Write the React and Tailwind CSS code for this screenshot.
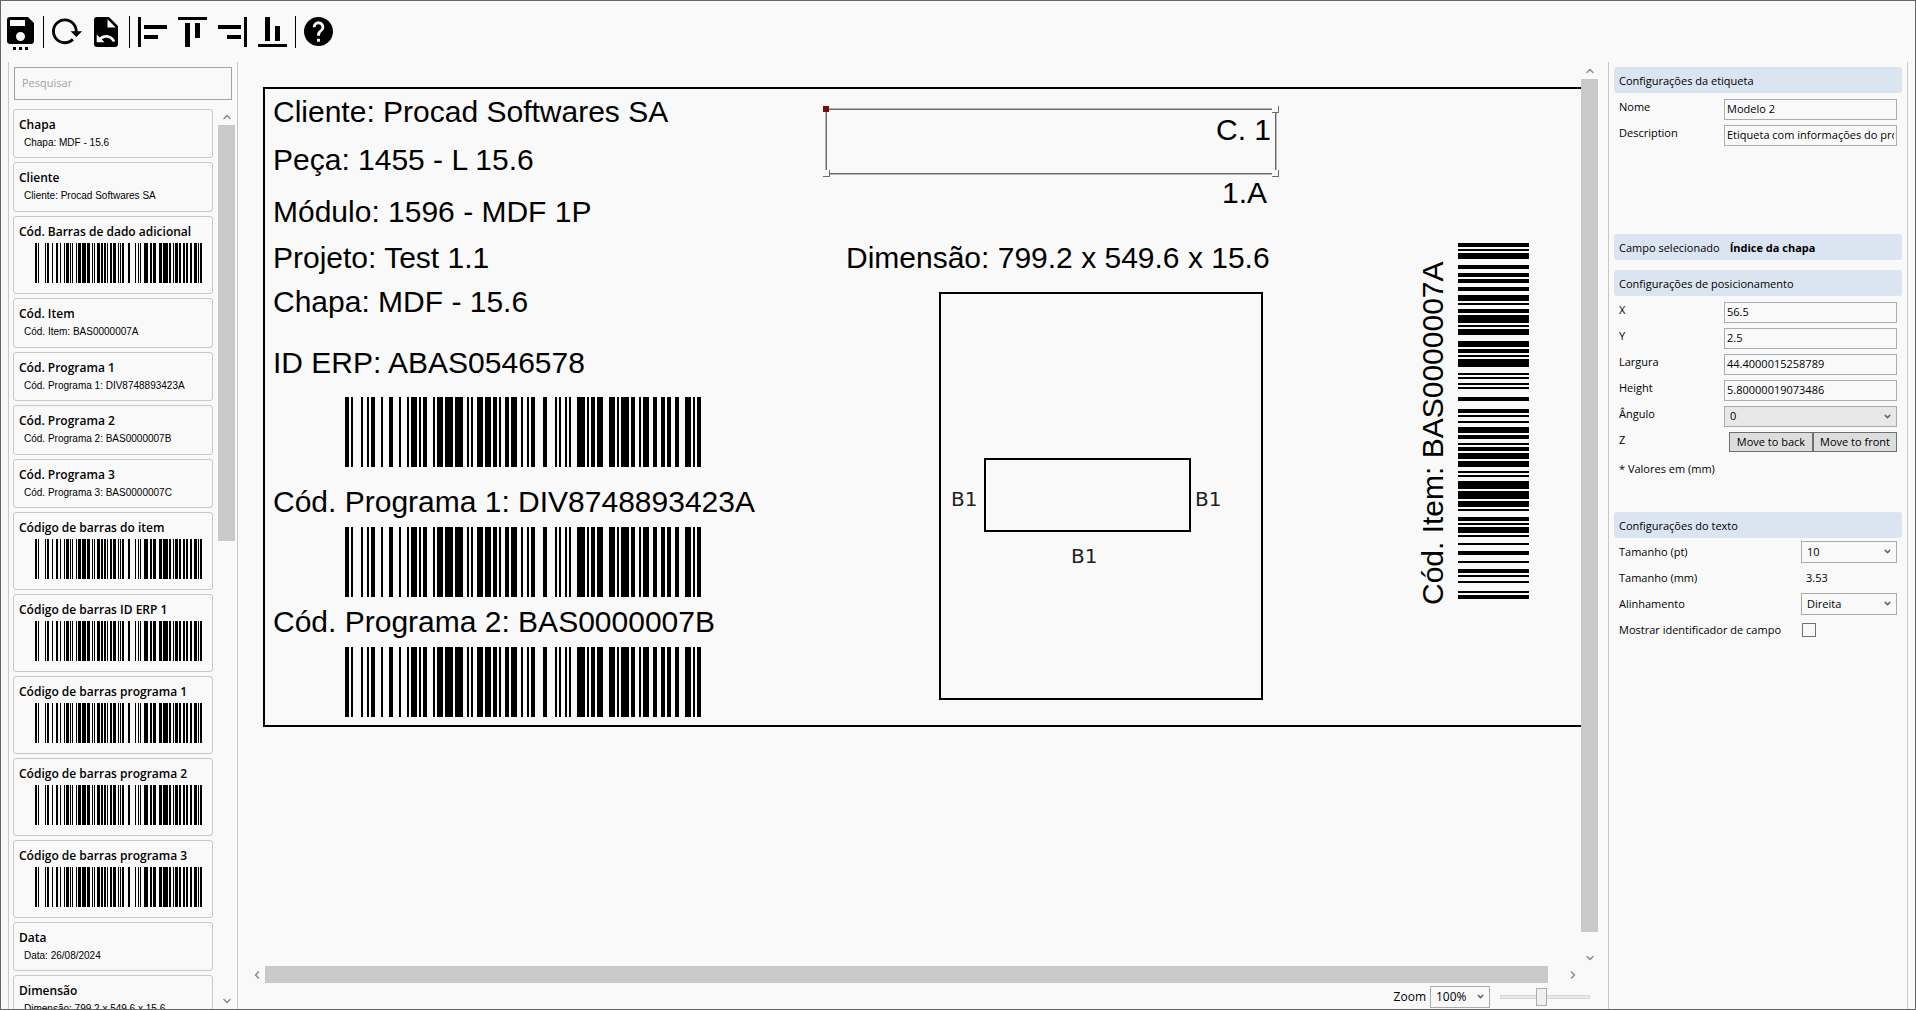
import React, { useState } from "react";
import {
  LuChevronDown,
  LuChevronLeft,
  LuChevronRight,
  LuChevronUp,
} from "react-icons/lu";

// Code 128 symbol: alternating bar / space widths in modules
const CODE =
  "2114121123132313113111231131414211123131211221321211242411121113411121333111412211322221222331112";

const BARS = [];
let total = 0;
CODE.split("").forEach((w, i) => {
  if (i % 2 === 0) BARS.push({ x: total, w: Number(w) });
  total += Number(w);
});

const FIELDS = [
  { title: "Chapa", text: "Chapa: MDF - 15.6" },
  { title: "Cliente", text: "Cliente: Procad Softwares SA" },
  { title: "Cód. Barras de dado adicional" },
  { title: "Cód. Item", text: "Cód. Item: BAS0000007A" },
  { title: "Cód. Programa 1", text: "Cód. Programa 1: DIV8748893423A" },
  { title: "Cód. Programa 2", text: "Cód. Programa 2: BAS0000007B" },
  { title: "Cód. Programa 3", text: "Cód. Programa 3: BAS0000007C" },
  { title: "Código de barras do item" },
  { title: "Código de barras ID ERP 1" },
  { title: "Código de barras programa 1" },
  { title: "Código de barras programa 2" },
  { title: "Código de barras programa 3" },
  { title: "Data", text: "Data: 26/08/2024" },
  { title: "Dimensão", text: "Dimensão: 799.2 x 549.6 x 15.6" },
];

const LABEL_TEXTS = [
  { text: "Cliente: Procad Softwares SA", pos: "left-[8px] top-[6px]" },
  { text: "Peça: 1455 - L 15.6", pos: "left-[8px] top-[54px]" },
  { text: "Módulo: 1596 - MDF 1P", pos: "left-[8px] top-[106px]" },
  { text: "Projeto: Test 1.1", pos: "left-[8px] top-[152px]" },
  { text: "Chapa: MDF - 15.6", pos: "left-[8px] top-[196px]" },
  { text: "ID ERP: ABAS0546578", pos: "left-[8px] top-[257px]" },
  { text: "Cód. Programa 1: DIV8748893423A", pos: "left-[8px] top-[396px]" },
  { text: "Cód. Programa 2: BAS0000007B", pos: "left-[8px] top-[516px]" },
  { text: "1.A", pos: "left-[957px] top-[87px]" },
  { text: "Dimensão: 799.2 x 549.6 x 15.6", pos: "left-[581px] top-[152px]" },
];

const Barcode = ({ className, vertical }) => (
  <svg
    viewBox={vertical ? `0 0 10 ${total}` : `0 0 ${total} 10`}
    preserveAspectRatio="none"
    shapeRendering="crispEdges"
    className={className}
  >
    {BARS.map((b) =>
      vertical ? (
        <rect key={b.x} x="0" y={total - b.x - b.w} width="10" height={b.w} />
      ) : (
        <rect key={b.x} x={b.x} y="0" width={b.w} height="10" />
      )
    )}
  </svg>
);

const ToolButton = ({ label, width, height, viewBox, children }) => (
  <button type="button" aria-label={label} title={label} className="shrink-0">
    <svg width={width} height={height} viewBox={viewBox} fill="black">
      {children}
    </svg>
  </button>
);

const Separator = () => <div className="w-px h-8 bg-black" />;

const Toolbar = () => (
  <header className="h-[61px] shrink-0 flex items-start gap-2 pl-1.5 pt-[15px]">
    <div className="flex pt-px pr-px">
      <ToolButton label="Salvar" width={27} height={33} viewBox="3 2 18 22">
        <path d="M15,8V4H5V8H15M12,18A3,3 0 0,0 15,15A3,3 0 0,0 12,12A3,3 0 0,0 9,15A3,3 0 0,0 12,18M17,2L21,6V18A2,2 0 0,1 19,20H5C3.89,20 3,19.1 3,18V4A2,2 0 0,1 5,2H17M11,22H13V24H11V22M7,22H9V24H7V22M15,22H17V24H15V22Z" />
      </ToolButton>
    </div>
    <Separator />
    <div className="flex items-start gap-3 pt-px pr-[3px]">
      <ToolButton label="Refazer" width={30} height={30} viewBox="2 2 21 21">
        <path d="M2 12C2 16.97 6.03 21 11 21C13.39 21 15.68 20.06 17.4 18.4L15.9 16.9C14.63 18.25 12.86 19 11 19C4.76 19 1.64 11.46 6.05 7.05C10.46 2.64 18 5.77 18 12H15L19 16H19.1L23 12H20C20 7.03 15.97 3 11 3C6.03 3 2 7.03 2 12Z" />
      </ToolButton>
      <ToolButton label="Restaurar" width={24} height={30} viewBox="4 2 16 20">
        <path
          fillRule="evenodd"
          d="M14 2H6A2 2 0 0 0 4 4V20A2 2 0 0 0 6 22H18A2 2 0 0 0 20 20V8L14 2ZM13 3.5L18.5 9H13V3.5ZM5.8 13.6V18.8H11L9.1 16.9C11.8 14.9 15 15.6 16.6 18.6L18.2 18C16.2 13.8 11.4 12.7 7.8 15.6L5.8 13.6Z"
        />
      </ToolButton>
    </div>
    <Separator />
    <div className="flex gap-[11px] pt-px">
      <ToolButton label="Alinhar à esquerda" width={29} height={30} viewBox="0 0 29 30">
        <path d="M0 0h3v30H0zM6 8h23v4H6zM6 18h14v4H6z" />
      </ToolButton>
      <ToolButton label="Alinhar ao topo" width={29} height={30} viewBox="0 0 29 30">
        <path d="M0 0h29v3H0zM7 6h5v24H7zM17 6h5v15h-5z" />
      </ToolButton>
      <ToolButton label="Alinhar à direita" width={29} height={30} viewBox="0 0 29 30">
        <path d="M26 0h3v30h-3zM0 8h23v4H0zM9 18h14v4H9z" />
      </ToolButton>
      <ToolButton label="Alinhar à base" width={29} height={30} viewBox="0 0 29 30">
        <path d="M0 27h29v3H0zM7 0h5v24H7zM17 9h5v15h-5z" />
      </ToolButton>
    </div>
    <Separator />
    <div className="flex pt-px">
      <ToolButton label="Ajuda" width={29} height={29} viewBox="2 2 20 20">
        <path d="M15.07,11.25L14.17,12.17C13.45,12.89 13,13.5 13,15H11V14.5C11,13.39 11.45,12.39 12.17,11.67L13.41,10.41C13.78,10.05 14,9.55 14,9C14,7.89 13.1,7 12,7A2,2 0 0,0 10,9H8A4,4 0 0,1 12,5A4,4 0 0,1 16,9C16,9.88 15.64,10.67 15.07,11.25M13,19H11V17H13M12,2A10,10 0 0,0 2,12A10,10 0 0,0 12,22A10,10 0 0,0 22,12C22,6.47 17.5,2 12,2Z" />
      </ToolButton>
    </div>
  </header>
);

const VerticalScroll = ({ thumb }) => (
  <div className="w-[17px] shrink-0 flex flex-col items-center">
    <button type="button" aria-label="Subir" className="h-[17px] text-[#8c8c8c]">
      <LuChevronUp size={12} strokeWidth={3} />
    </button>
    <div className="flex-1 w-full">
      <div className={`w-full bg-[#c9c9c9] ${thumb}`} />
    </div>
    <button type="button" aria-label="Descer" className="h-[17px] text-[#8c8c8c]">
      <LuChevronDown size={12} strokeWidth={3} />
    </button>
  </div>
);

const FieldCard = ({ title, text }) => (
  <li
    className={`border border-[#c8c8c8] rounded-[3px] pl-[5px] pt-[7px] shrink-0 ${
      text ? "h-[49px] even:h-[50px]" : "h-[78px]"
    }`}
  >
    <div className="text-[12px] leading-4 font-semibold whitespace-nowrap">{title}</div>
    {text ? (
      <div className="pl-[5px] mt-1 text-[10px] leading-3 font-['Liberation_Sans',Arial,sans-serif] whitespace-nowrap">
        {text}
      </div>
    ) : (
      <Barcode className="block ml-4 mt-[3px] w-[167px] h-10" />
    )}
  </li>
);

const FieldsPanel = () => {
  const [search, setSearch] = useState("");
  const fields = FIELDS.filter((f) =>
    f.title.toLowerCase().includes(search.toLowerCase())
  );

  return (
    <aside className="w-[230px] shrink-0 flex flex-col border-x border-[#c8c8c8] pt-[5px]">
      <input
        type="text"
        aria-label="Pesquisar"
        placeholder="Pesquisar"
        value={search}
        onChange={(e) => setSearch(e.target.value)}
        className="mx-[5px] h-[33px] px-[7px] pb-0.5 border border-[#a3a3a3] text-[11px] placeholder:text-[#a3a3a3] focus:outline-none"
      />
      <div className="flex-1 min-h-0 flex mt-2 pr-0.5">
        <ul className="flex-1 min-h-0 overflow-hidden flex flex-col gap-1 pl-1 pr-[5px] pt-px">
          {fields.map((f) => (
            <FieldCard key={f.title} {...f} />
          ))}
        </ul>
        <VerticalScroll thumb="h-[48%]" />
      </div>
    </aside>
  );
};

const Handle = ({ className }) => (
  <span
    className={`absolute size-[7px] border-r border-b border-[#6b6b6b] bg-[#f9f9f9] ${className}`}
  />
);

const Label = () => (
  <div className="absolute left-[15px] top-[25px] w-[1600px] h-[640px] border-2 border-black font-['Liberation_Sans',Arial,sans-serif] text-[30px] leading-[34px] whitespace-nowrap">
    {LABEL_TEXTS.map((t) => (
      <div key={t.text} className={`absolute ${t.pos}`}>
        {t.text}
      </div>
    ))}
    <Barcode className="absolute left-[80px] top-[308px] w-[356px] h-[70px]" />
    <Barcode className="absolute left-[80px] top-[438px] w-[356px] h-[70px]" />
    <Barcode className="absolute left-[80px] top-[558px] w-[356px] h-[70px]" />

    {/* selected field */}
    <div className="absolute left-[561px] top-[20px] w-[450px] h-[65px] border border-[#6b6b6b] outline outline-[#b5b5b5] pt-[3px] pr-1 text-right">
      C. 1
      <span className="absolute -left-1 -top-1 size-1.5 bg-[#7a0c0c]" />
      <Handle className="-right-1 -top-1" />
      <Handle className="-left-1 -bottom-1" />
      <Handle className="-right-1 -bottom-1" />
    </div>

    {/* part drawing with its edge bands */}
    <svg
      className="absolute left-[674px] top-[202px]"
      width="326"
      height="410"
      fill="none"
      stroke="black"
      strokeWidth="2"
    >
      <rect x="1" y="2" width="322" height="406" />
      <rect x="46" y="168" width="205" height="72" />
      <g
        fill="#222"
        stroke="none"
        fontSize="20"
        fontFamily="'DejaVu Sans', Verdana, sans-serif"
      >
        <text x="12" y="215">B1</text>
        <text x="256" y="215">B1</text>
        <text x="132" y="272">B1</text>
      </g>
    </svg>

    <div className="absolute left-[1151px] top-[516px] origin-top-left -rotate-90">
      Cód. Item: BAS0000007A
    </div>
    <Barcode
      vertical
      className="absolute left-[1193px] top-[154px] w-[71px] h-[356px]"
    />
  </div>
);

const Select = ({ id, value, options, className }) => (
  <div className={`relative ${className}`}>
    <select
      id={id}
      defaultValue={value}
      className="appearance-none w-full h-full pl-[5px] bg-transparent border border-[#acacac] focus:outline-none"
    >
      {options.map((o) => (
        <option key={o}>{o}</option>
      ))}
    </select>
    <LuChevronDown
      size={9}
      strokeWidth={4}
      className="absolute right-[5px] top-1.5 text-[#666] pointer-events-none"
    />
  </div>
);

const Workspace = () => (
  <main className="flex-1 min-w-0 flex flex-col px-2.5">
    <div className="flex-1 min-h-0 flex">
      <div className="relative flex-1 min-w-0 overflow-hidden">
        <Label />
      </div>
      <VerticalScroll thumb="h-[98%]" />
    </div>
    <div className="h-[17px] mr-[17px] flex items-center text-[#8c8c8c]">
      <button type="button" aria-label="Esquerda" className="w-[17px] flex justify-center">
        <LuChevronLeft size={12} strokeWidth={3} />
      </button>
      <div className="flex-1 h-full pr-4">
        <div className="h-full bg-[#c9c9c9]" />
      </div>
      <button type="button" aria-label="Direita" className="w-[17px] flex justify-center">
        <LuChevronRight size={12} strokeWidth={3} />
      </button>
    </div>
    <div className="h-[26px] pt-0.5 flex items-center justify-end pr-2 text-[12px]">
      <label htmlFor="zoom" className="mr-1">
        Zoom
      </label>
      <Select
        id="zoom"
        value="100%"
        options={["50%", "100%", "200%"]}
        className="w-[60px] h-[22px] mr-2.5"
      />
      <input
        type="range"
        aria-label="Nível de zoom"
        min="0"
        max="100"
        defaultValue="46"
        className="appearance-none w-[90px] h-1 bg-[#e7eaea] border border-[#d6d6d6] [&::-webkit-slider-thumb]:appearance-none [&::-webkit-slider-thumb]:w-[11px] [&::-webkit-slider-thumb]:h-[18px] [&::-webkit-slider-thumb]:bg-[#f0f0f0] [&::-webkit-slider-thumb]:border [&::-webkit-slider-thumb]:border-[#acacac]"
      />
    </div>
  </main>
);

const Heading = ({ children }) => (
  <h2 className="h-[26px] px-[5px] pt-0.5 flex items-center gap-2.5 bg-[#dbe5f1] rounded-[3px]">
    {children}
  </h2>
);

const Row = ({ id, label, children }) => (
  <div className="h-[26px] px-[5px] flex items-center justify-between">
    <label htmlFor={id}>{label}</label>
    {children}
  </div>
);

const TextRow = ({ id, label, value }) => (
  <div className="h-[26px] px-[5px] flex items-center justify-between">
    <label htmlFor={id} className="pb-1">
      {label}
    </label>
    <input
      id={id}
      type="text"
      defaultValue={value}
      className="w-[173px] h-[21px] px-0.5 pb-0.5 border border-[#abadb3] focus:outline-none"
    />
  </div>
);

const SettingsPanel = () => (
  <aside className="w-[300px] mr-[7px] shrink-0 border-x border-[#c8c8c8] px-[5px] pt-[5px] text-[11px] leading-4">
    <Heading>Configurações da etiqueta</Heading>
    <div className="pt-[3px]">
      <TextRow id="nome" label="Nome" value="Modelo 2" />
      <TextRow
        id="descricao"
        label="Description"
        value="Etiqueta com informações do produto"
      />
    </div>

    <div className="mt-[86px]">
      <Heading>
        <span>Campo selecionado</span>
        <span className="font-bold">Índice da chapa</span>
      </Heading>
    </div>

    <div className="mt-2.5">
      <Heading>Configurações de posicionamento</Heading>
      <div className="pt-[3px]">
        <TextRow id="x" label="X" value="56.5" />
        <TextRow id="y" label="Y" value="2.5" />
        <TextRow id="largura" label="Largura" value="44.4000015258789" />
        <TextRow id="altura" label="Height" value="5.80000019073486" />
        <div className="h-[26px] px-[5px] flex items-center justify-between">
          <label htmlFor="angulo" className="pb-1">
            Ângulo
          </label>
          <Select
            id="angulo"
            value="0"
            options={["0", "90", "180", "270"]}
            className="w-[173px] h-[21px] bg-[#e8e8e8]"
          />
        </div>
        <div className="h-[26px] px-[5px] flex items-center justify-between">
          <span className="pb-1">Z</span>
          <div className="flex">
            <button type="button" className="w-[84px] h-5 border border-[#707070] bg-[#dddddd] whitespace-nowrap">
              Move to back
            </button>
            <button type="button" className="w-[84px] h-5 border border-[#707070] bg-[#dddddd] whitespace-nowrap">
              Move to front
            </button>
          </div>
        </div>
      </div>
      <p className="px-[5px] mt-1.5">* Valores em (mm)</p>
    </div>

    <div className="mt-[35px]">
      <Heading>Configurações do texto</Heading>
      <div className="pt-px">
        <Row id="tamanho" label="Tamanho (pt)">
          <Select
            id="tamanho"
            value="10"
            options={["8", "10", "12", "14"]}
            className="w-24 h-[22px]"
          />
        </Row>
        <div className="h-[26px] px-[5px] flex items-center justify-between">
          <span>Tamanho (mm)</span>
          <span className="w-[91px]">3.53</span>
        </div>
        <Row id="alinhamento" label="Alinhamento">
          <Select
            id="alinhamento"
            value="Direita"
            options={["Esquerda", "Centro", "Direita"]}
            className="w-24 h-[22px]"
          />
        </Row>
        <Row id="identificador" label="Mostrar identificador de campo">
          <div className="w-[95px] flex">
            <input
              id="identificador"
              type="checkbox"
              className="appearance-none size-3.5 border border-[#707070] checked:bg-[#707070]"
            />
          </div>
        </Row>
      </div>
    </div>
  </aside>
);

const App = () => (
  <div className="h-screen flex flex-col overflow-hidden bg-[#f9f9f9] border border-[#666] text-black font-['Open_Sans','Noto_Sans',sans-serif]">
    <Toolbar />
    <div className="flex-1 min-h-0 flex pl-[7px]">
      <FieldsPanel />
      <Workspace />
      <SettingsPanel />
    </div>
  </div>
);

export default App;
